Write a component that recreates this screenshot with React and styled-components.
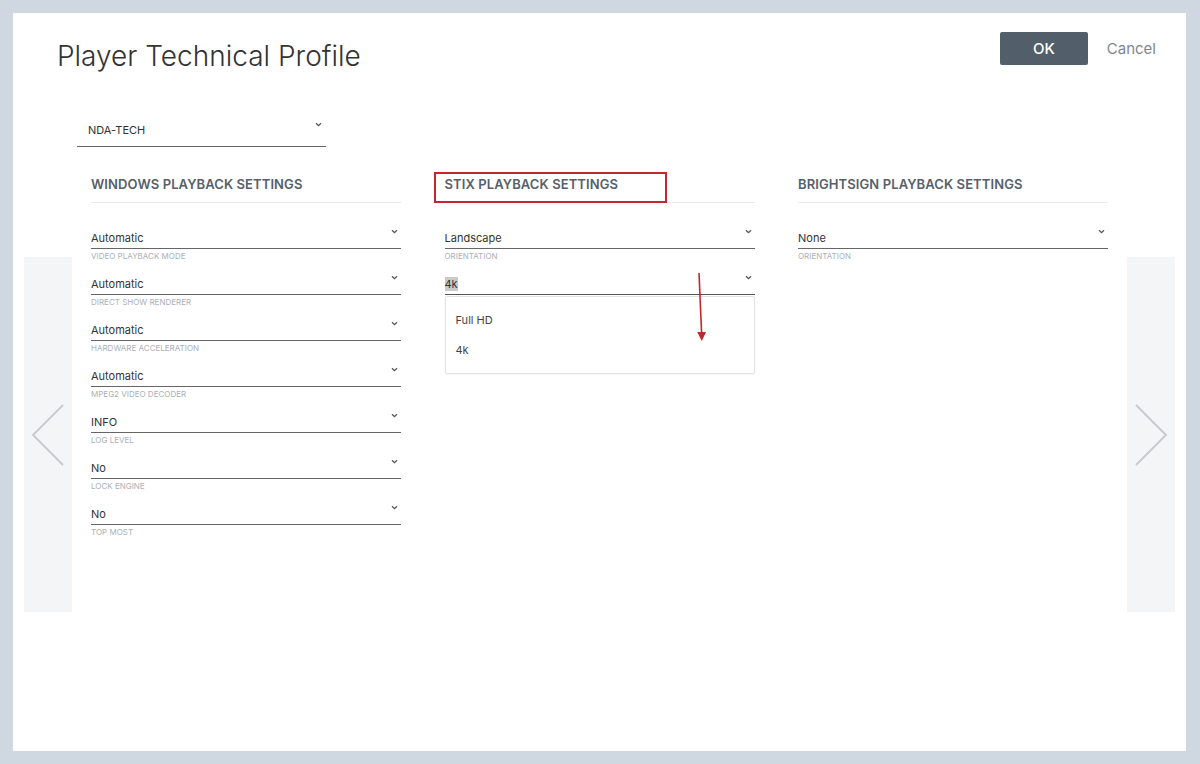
import React from "react";
import styled, { createGlobalStyle } from "styled-components";

const GlobalStyle = createGlobalStyle`
  html, body {
    margin: 0;
    padding: 0;
    background: #cfd8e0;
    font-family: Inter, "Noto Sans", "Liberation Sans", sans-serif;
    color: #333;
  }
  *, *::before, *::after {
    box-sizing: border-box;
  }
`;

const windowsFields = [
  { value: "Automatic", label: "Video playback mode" },
  { value: "Automatic", label: "Direct show renderer" },
  { value: "Automatic", label: "Hardware acceleration" },
  { value: "Automatic", label: "MPEG2 video decoder" },
  { value: "INFO", label: "Log level" },
  { value: "No", label: "Lock engine" },
  { value: "No", label: "Top most" },
];

const Chevron = () => (
  <ChevronIcon width="7" height="5" viewBox="0 0 7 5">
    <path d="M1 1.2 L3.5 3.6 L6 1.2" fill="none" stroke="#555" strokeWidth="1.3" />
  </ChevronIcon>
);

const Arrow = ({ dir }) => (
  <svg width="34" height="62" viewBox="0 0 34 62">
    <polyline
      points={dir === "left" ? "32,1 2,31 32,61" : "2,1 32,31 2,61"}
      fill="none"
      stroke="#c6c9ce"
      strokeWidth="1.8"
    />
  </svg>
);

const Field = ({ value, label, selected, options }) => (
  <FieldWrap>
    <SelectRow active={!!options}>
      <Value selected={selected}>{value}</Value>
      <Chevron />
    </SelectRow>
    <Label>{label}</Label>
    {options && (
      <>
        <Menu>
          {options.map((o) => (
            <Option key={o}>{o}</Option>
          ))}
        </Menu>
        <RedArrow width="14" height="70" viewBox="0 0 14 70">
          <line x1="4" y1="0" x2="6.6" y2="60" stroke="#c1272d" strokeWidth="1.6" />
          <polygon points="2.2,59 11,59 6.8,68" fill="#c1272d" />
        </RedArrow>
      </>
    )}
  </FieldWrap>
);

const App = () => {
  return (
    <>
      <GlobalStyle />
      <Page>
        <Panel>
          <Header>
            <Title>Player Technical Profile</Title>
            <Actions>
              <OkButton>OK</OkButton>
              <CancelButton>Cancel</CancelButton>
            </Actions>
          </Header>

          <Body>
            <Nav>
              <Arrow dir="left" />
            </Nav>

            <Main>
              <ProfileSelect>
                <ProfileValue>NDA-TECH</ProfileValue>
                <Chevron />
              </ProfileSelect>

              <Columns>
                <Column>
                  <SectionHeader>
                    <SectionTitle>Windows Playback Settings</SectionTitle>
                  </SectionHeader>
                  <FieldList>
                    {windowsFields.map((f, i) => (
                      <Field key={i} value={f.value} label={f.label} />
                    ))}
                  </FieldList>
                </Column>

                <Column>
                  <SectionHeader>
                    <SectionTitle highlighted>Stix Playback Settings</SectionTitle>
                  </SectionHeader>
                  <FieldList>
                    <Field value="Landscape" label="Orientation" />
                    <Field value="4k" label="Resolution" selected options={["Full HD", "4k"]} />
                  </FieldList>
                </Column>

                <Column>
                  <SectionHeader>
                    <SectionTitle>Brightsign Playback Settings</SectionTitle>
                  </SectionHeader>
                  <FieldList>
                    <Field value="None" label="Orientation" />
                  </FieldList>
                </Column>
              </Columns>
            </Main>

            <Nav>
              <Arrow dir="right" />
            </Nav>
          </Body>
        </Panel>
      </Page>
    </>
  );
};

const Page = styled.div`
  width: 1200px;
  height: 764px;
  padding: 13px 14px 13px 13px;
`;

const Panel = styled.div`
  width: 1173px;
  height: 738px;
  background: #fff;
  display: flex;
  flex-direction: column;
`;

const Header = styled.div`
  display: flex;
  justify-content: space-between;
  align-items: flex-start;
  padding: 19px 30px 0 44px;
`;

const Title = styled.h1`
  margin: 0;
  font-size: 28px;
  line-height: 48px;
  font-weight: 300;
  color: #333;
`;

const Actions = styled.div`
  display: flex;
  align-items: center;
  gap: 19px;
`;

const OkButton = styled.button`
  width: 88px;
  height: 33px;
  border: none;
  border-radius: 2px;
  background: #525f6b;
  color: #fff;
  font-family: inherit;
  font-size: 15px;
  font-weight: 500;
  cursor: pointer;
`;

const CancelButton = styled.button`
  border: none;
  background: none;
  padding: 0;
  color: #7d8790;
  font-family: inherit;
  font-size: 15px;
  cursor: pointer;
`;

const Body = styled.div`
  display: flex;
  align-items: flex-start;
  padding: 0 11px;
`;

const Nav = styled.div`
  width: 48px;
  height: 355px;
  margin-top: 177px;
  background: #f4f5f7;
  display: flex;
  align-items: center;
  justify-content: center;
  flex-shrink: 0;
`;

const Main = styled.div`
  flex: 1;
  padding-top: 40px;
`;

const ProfileSelect = styled.div`
  width: 249px;
  height: 27px;
  margin-left: 5px;
  padding: 0 4px 7px 11px;
  display: flex;
  align-items: center;
  justify-content: space-between;
  border-bottom: 1px solid #666;
`;

const ProfileValue = styled.span`
  font-size: 11px;
  color: #333;
`;

const Columns = styled.div`
  display: grid;
  grid-template-columns: repeat(3, 310px);
  column-gap: 43.5px;
  padding-left: 19px;
  margin-top: 25px;
`;

const Column = styled.div`
  display: flex;
  flex-direction: column;
`;

const SectionHeader = styled.div`
  display: flex;
  align-items: flex-start;
  height: 31px;
  padding-top: 4px;
  border-bottom: 1px solid #e9ebee;
`;

const SectionTitle = styled.span`
  position: relative;
  font-size: 13px;
  line-height: 16px;
  font-weight: 600;
  text-transform: uppercase;
  color: #56606b;
  letter-spacing: 0.1px;

  ${({ highlighted }) =>
    highlighted &&
    `
    &::before {
      content: "";
      position: absolute;
      left: -11px;
      top: -4px;
      width: 233px;
      height: 31px;
      border: 2px solid #c1272d;
    }
  `}
`;

const FieldList = styled.div`
  display: flex;
  flex-direction: column;
  gap: 10px;
  margin-top: 24px;
`;

const FieldWrap = styled.div`
  position: relative;
`;

const SelectRow = styled.div`
  height: 22px;
  display: flex;
  align-items: center;
  justify-content: space-between;
  padding-right: 3px;
  border-bottom: ${({ active }) => (active ? "1.5px solid #555" : "1px solid #666")};
`;

const Value = styled.span`
  font-size: 11px;
  color: #333;
  background: ${({ selected }) => (selected ? "#c9c9c9" : "transparent")};
`;

const ChevronIcon = styled.svg`
  align-self: flex-start;
  margin-top: 2px;
  flex-shrink: 0;
`;

const Label = styled.div`
  font-size: 8px;
  line-height: 14px;
  text-transform: uppercase;
  color: #aab0b6;
`;

const Menu = styled.div`
  position: absolute;
  top: 23px;
  left: 0;
  right: 0;
  padding: 8px 0 8px;
  background: #fff;
  border: 1px solid #e1e3e6;
  border-radius: 2px;
  box-shadow: 0 1px 2px rgba(0, 0, 0, 0.04);
  z-index: 2;
`;

const Option = styled.div`
  height: 30px;
  line-height: 30px;
  padding-left: 10px;
  font-size: 11px;
  color: #444;
`;

const RedArrow = styled.svg`
  position: absolute;
  top: 0;
  left: 250px;
  z-index: 3;
`;

export default App;
